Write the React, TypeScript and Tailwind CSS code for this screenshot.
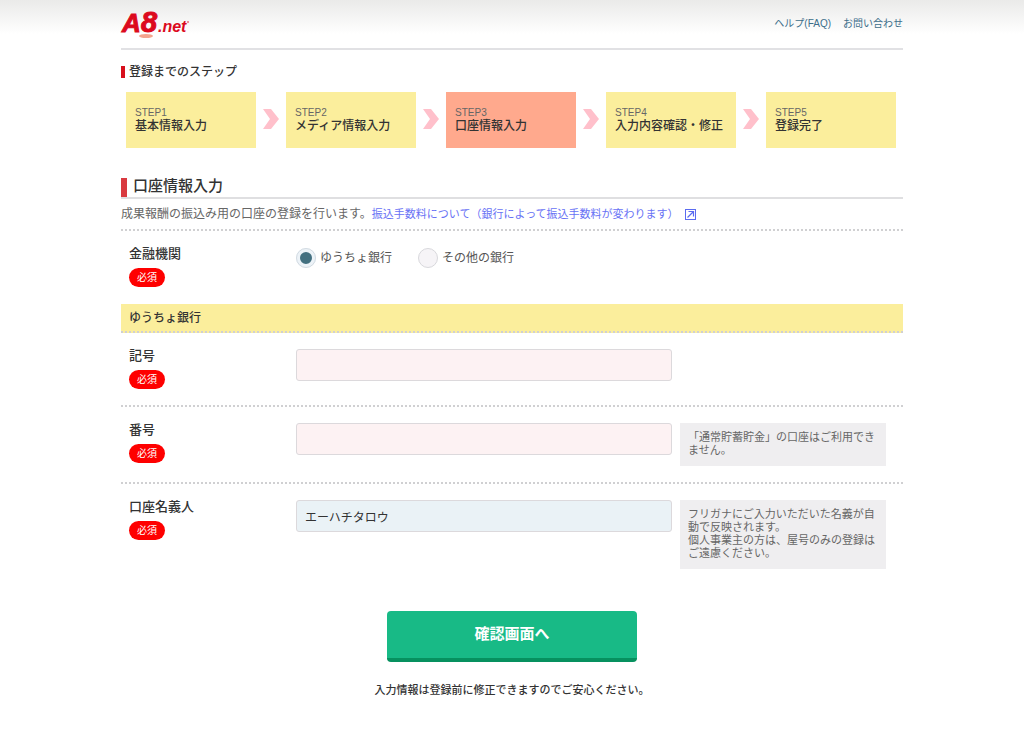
import { useState, type ReactNode } from 'react'
import { clsx } from 'clsx'

const steps = [
  '基本情報入力',
  'メディア情報入力',
  '口座情報入力',
  '入力内容確認・修正',
  '登録完了',
]

const CURRENT_STEP = 2

function Logo() {
  return (
    <svg
      width="68"
      height="34"
      viewBox="0 0 68 34"
      role="img"
      aria-label="A8.net"
      className="overflow-visible"
    >
      <ellipse cx="25" cy="30" rx="7" ry="2" fill="#f4a58f" />
      <g
        fill="#dc0a1e"
        stroke="#dc0a1e"
        fontFamily='"Liberation Sans", Arial, sans-serif'
        fontWeight="700"
        fontStyle="italic"
      >
        <text x="1" y="26" fontSize="26" strokeWidth="1">A</text>
        <text x="20" y="26" fontSize="29" strokeWidth="1">8</text>
        <text x="37" y="26" fontSize="16" strokeWidth="0">.net</text>
      </g>
      <circle cx="67" cy="16" r="1" fill="#e8707c" />
    </svg>
  )
}

function StepArrow() {
  return (
    <div className="flex w-[30px] shrink-0 items-center justify-center pb-0.5">
      <svg width="16" height="20" viewBox="0 0 16 20" aria-hidden="true">
        <path d="M0 0h8l8 10-8 10H0l7-10z" fill="#ffc0cb" />
      </svg>
    </div>
  )
}

function StepList() {
  return (
    <ol className="mt-3 flex pr-[7px] pl-[5px]">
      {steps.map((title, i) => (
        <li key={title} className={clsx('flex', i > 0 ? 'flex-[160]' : 'flex-[130]')}>
          {i > 0 && <StepArrow />}
          <div
            className={clsx(
              'h-14 flex-1 pt-[14px] pl-[9px] whitespace-nowrap',
              i === CURRENT_STEP ? 'bg-[#ffa98d]' : 'bg-[#fbee9c]',
            )}
            aria-current={i === CURRENT_STEP ? 'step' : undefined}
          >
            <p className="text-[10px] leading-[13px] text-[#666]">STEP{i + 1}</p>
            <p className="text-xs leading-[14px] font-medium">{title}</p>
          </div>
        </li>
      ))}
    </ol>
  )
}

function ExternalIcon() {
  return (
    <svg width="11" height="11" viewBox="0 0 11 11" fill="none" stroke="#5a6bf0" aria-hidden="true">
      <rect x="0.5" y="0.5" width="10" height="10" strokeWidth="1" />
      <path d="M2.5 8.5l6-6M3.5 2.5h5v5" strokeWidth="1.2" />
    </svg>
  )
}

type FormRowProps = {
  label: string
  htmlFor?: string
  labelId?: string
  last?: boolean
  children: ReactNode
}

function FormRow({ label, htmlFor, labelId, last, children }: FormRowProps) {
  return (
    <div className={clsx('flex pb-4 pl-2', !last && 'border-b-2 border-dotted border-[#d0d0d2]')}>
      <div className="w-[167px] shrink-0 pt-[15px]">
        <label id={labelId} htmlFor={htmlFor} className="block text-[13px] leading-4 font-medium">
          {label}
        </label>
        <span className="mt-1.5 block h-[19px] w-9 rounded-full bg-[#fe0000] text-center text-[10px] leading-[19px] text-white">
          必須
        </span>
      </div>
      {children}
    </div>
  )
}

function TextField({ id, defaultValue }: { id: string; defaultValue?: string }) {
  return (
    <input
      id={id}
      type="text"
      defaultValue={defaultValue}
      className={clsx(
        'mt-4 h-8 w-[376px] min-w-0 rounded-[3px] border border-[#dcd9dc] px-2 text-xs outline-none',
        defaultValue ? 'bg-[#eaf2f6]' : 'bg-[#fdf2f3]',
      )}
    />
  )
}

function Note({ children }: { children: ReactNode }) {
  return (
    <div className="mt-4 ml-2 w-[206px] shrink-0 self-start bg-[#efeef0] px-2 pt-2 pb-[9px] text-[11px] leading-[13px] text-[#666]">
      {children}
    </div>
  )
}

type BankRadioProps = {
  value: string
  label: string
  checked: boolean
  onChange: (value: string) => void
}

function BankRadio({ value, label, checked, onChange }: BankRadioProps) {
  return (
    <label className="flex items-center gap-1 text-xs text-[#555]">
      <input
        type="radio"
        name="bank"
        value={value}
        checked={checked}
        onChange={() => onChange(value)}
        className="size-5 appearance-none rounded-full border border-[#d8d8dc] bg-[#f6f4f7] checked:border-4 checked:border-[#edf3f8] checked:bg-[#437080] checked:outline checked:-outline-offset-1 checked:outline-[#d3dbe2]"
      />
      {label}
    </label>
  )
}

export default function App() {
  const [bank, setBank] = useState('yucho')

  return (
    <div className="min-h-screen bg-white bg-linear-to-b from-[#eaeae9] to-white to-[34px] font-['Liberation_Sans','Noto_Sans_CJK_JP',sans-serif] text-[#333]">
      <div className="mx-auto w-full max-w-[782px]">
        <header className="flex h-[50px] items-start justify-between border-b-2 border-[#e1e1e4] pt-[6px]">
          <a href="#">
            <Logo />
          </a>
          <nav className="mt-[10px] flex gap-3 text-[10px] leading-[15px] text-[#3c6e8a]">
            <a href="#">ヘルプ(FAQ)</a>
            <a href="#">お問い合わせ</a>
          </nav>
        </header>

        <main>
          <h2 className="mt-[14px] flex h-4 items-center gap-1 text-xs font-medium">
            <span className="h-3 w-1 bg-[#d8101c]" />
            登録までのステップ
          </h2>
          <StepList />

          <h1 className="mt-[30px] flex h-[21px] items-stretch gap-[6px] border-b-2 border-[#dfdfe1] text-[15px] leading-4 font-medium">
            <span className="w-[6px] bg-[#d93a40]" />
            口座情報入力
          </h1>
          <div className="flex h-8 items-center border-b-2 border-dotted border-[#d0d0d2] text-xs whitespace-nowrap text-[#666]">
            成果報酬の振込み用の口座の登録を行います。
            <a href="#" className="flex items-center gap-[6px] text-[11px] text-[#6872f5]">
              振込手数料について（銀行によって振込手数料が変わります）
              <ExternalIcon />
            </a>
          </div>

          <form onSubmit={(e) => e.preventDefault()}>
            <FormRow label="金融機関" labelId="bank-label" last>
              <div
                role="radiogroup"
                aria-labelledby="bank-label"
                className="mt-[17px] flex gap-[26px] self-start"
              >
                <BankRadio
                  value="yucho"
                  label="ゆうちょ銀行"
                  checked={bank === 'yucho'}
                  onChange={setBank}
                />
                <BankRadio
                  value="other"
                  label="その他の銀行"
                  checked={bank === 'other'}
                  onChange={setBank}
                />
              </div>
            </FormRow>

            <h3 className="mt-px h-[29px] border-b-2 border-dotted border-[#d0d0d2] bg-[#fbee9c] pl-2 text-xs leading-7 font-medium">
              ゆうちょ銀行
            </h3>
            <FormRow label="記号" htmlFor="symbol">
              <TextField id="symbol" />
            </FormRow>
            <FormRow label="番号" htmlFor="number">
              <TextField id="number" />
              <Note>「通常貯蓄貯金」の口座はご利用できません。</Note>
            </FormRow>
            <FormRow label="口座名義人" htmlFor="holder" last>
              <TextField id="holder" defaultValue="エーハチタロウ" />
              <Note>
                フリガナにご入力いただいた名義が自動で反映されます。
                <br />
                個人事業主の方は、屋号のみの登録はご遠慮ください。
              </Note>
            </FormRow>

            <button
              type="submit"
              className="mx-auto mt-[26px] block h-[51px] w-[250px] rounded-[4px] border-b-4 border-[#07915f] bg-[#18ba86] text-[15px] font-bold text-white"
            >
              確認画面へ
            </button>
            <p className="mt-5 text-center text-[11px] leading-4 font-medium">
              入力情報は登録前に修正できますのでご安心ください。
            </p>
          </form>
        </main>
      </div>
    </div>
  )
}
